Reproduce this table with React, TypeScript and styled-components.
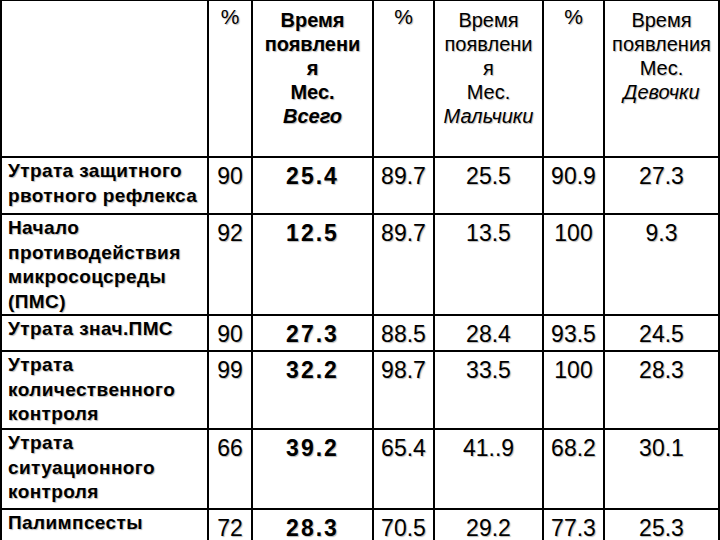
import { Fragment } from 'react';
import styled, { createGlobalStyle } from 'styled-components';

const GlobalStyle = createGlobalStyle`
  html, body {
    margin: 0;
    padding: 0;
    background: #ffffff;
  }
  body {
    font-family: "Liberation Sans", Arial, sans-serif;
    color: #000000;
  }
`;

const Page = styled.div`
  width: 720px;
  height: 540px;
  overflow: hidden;
  background: #ffffff;
`;

const Table = styled.table`
  width: 718px;
  table-layout: fixed;
  border-collapse: collapse;
  margin-top: -1px;

  td,
  th {
    border: 2px solid #000000;
    vertical-align: top;
    padding: 0;
    text-shadow: 1px 1px 1px rgba(0, 0, 0, 0.28);
  }
`;

const HeadRow = styled.tr`
  height: 157px;
`;

const BodyRow = styled.tr<{ $height: number }>`
  height: ${({ $height }) => $height}px;
`;

const HeadCell = styled.th<{ $bold?: boolean }>`
  font-size: 20px;
  line-height: 24px;
  font-weight: ${({ $bold }) => ($bold ? 'bold' : 'normal')};
  text-align: center;
  padding-top: 7px !important;
`;

const Percent = styled.span`
  font-size: 21px;
  font-weight: normal;
  position: relative;
  top: -3px;
`;

const Label = styled.td`
  font-size: 19px;
  line-height: 24.5px;
  font-weight: bold;
  letter-spacing: 0.4px;
  text-align: left;
  padding: 1px 0 0 6px !important;
`;

const Num = styled.td<{ $bold?: boolean }>`
  font-size: 23px;
  line-height: 26px;
  font-weight: ${({ $bold }) => ($bold ? 'bold' : 'normal')};
  letter-spacing: ${({ $bold }) => ($bold ? '2px' : '0')};
  text-align: center;
  padding-top: 5px !important;
`;

type Row = {
  label: string[];
  values: string[];
  height: number;
};

const rows: Row[] = [
  {
    label: ['Утрата защитного', 'рвотного рефлекса'],
    values: ['90', '25.4', '89.7', '25.5', '90.9', '27.3'],
    height: 57,
  },
  {
    label: ['Начало', 'противодействия', 'микросоцсреды', '(ПМС)'],
    values: ['92', '12.5', '89.7', '13.5', '100', '9.3'],
    height: 99,
  },
  {
    label: ['Утрата знач.ПМС'],
    values: ['90', '27.3', '88.5', '28.4', '93.5', '24.5'],
    height: 36,
  },
  {
    label: ['Утрата', 'количественного', 'контроля'],
    values: ['99', '32.2', '98.7', '33.5', '100', '28.3'],
    height: 78,
  },
  {
    label: ['Утрата', 'ситуационного', 'контроля'],
    values: ['66', '39.2', '65.4', '41..9', '68.2', '30.1'],
    height: 80,
  },
  {
    label: ['Палимпсесты'],
    values: ['72', '28.3', '70.5', '29.2', '77.3', '25.3'],
    height: 40,
  },
];

const lines = (parts: string[]) =>
  parts.map((part, i) => (
    <Fragment key={i}>
      {i > 0 && <br />}
      {part}
    </Fragment>
  ));

const App = () => {
  return (
    <Page>
      <GlobalStyle />
      <Table>
        <colgroup>
          <col style={{ width: 207 }} />
          <col style={{ width: 44 }} />
          <col style={{ width: 121 }} />
          <col style={{ width: 61 }} />
          <col style={{ width: 109 }} />
          <col style={{ width: 61 }} />
          <col style={{ width: 115 }} />
        </colgroup>
        <tbody>
          <HeadRow>
            <HeadCell />
            <HeadCell>
              <Percent>%</Percent>
            </HeadCell>
            <HeadCell $bold>
              Время
              <br />
              появлени
              <br />я
              <br />
              Мес.
              <br />
              <i>Всего</i>
            </HeadCell>
            <HeadCell>
              <Percent>%</Percent>
            </HeadCell>
            <HeadCell>
              Время
              <br />
              появлени
              <br />я
              <br />
              Мес.
              <br />
              <i>Мальчики</i>
            </HeadCell>
            <HeadCell>
              <Percent>%</Percent>
            </HeadCell>
            <HeadCell>
              Время
              <br />
              появления
              <br />
              Мес.
              <br />
              <i>Девочки</i>
            </HeadCell>
          </HeadRow>
          {rows.map((row) => (
            <BodyRow key={row.label.join(' ')} $height={row.height}>
              <Label>{lines(row.label)}</Label>
              {row.values.map((value, i) => (
                <Num key={i} $bold={i === 1}>
                  {value}
                </Num>
              ))}
            </BodyRow>
          ))}
        </tbody>
      </Table>
    </Page>
  );
};

export default App;
